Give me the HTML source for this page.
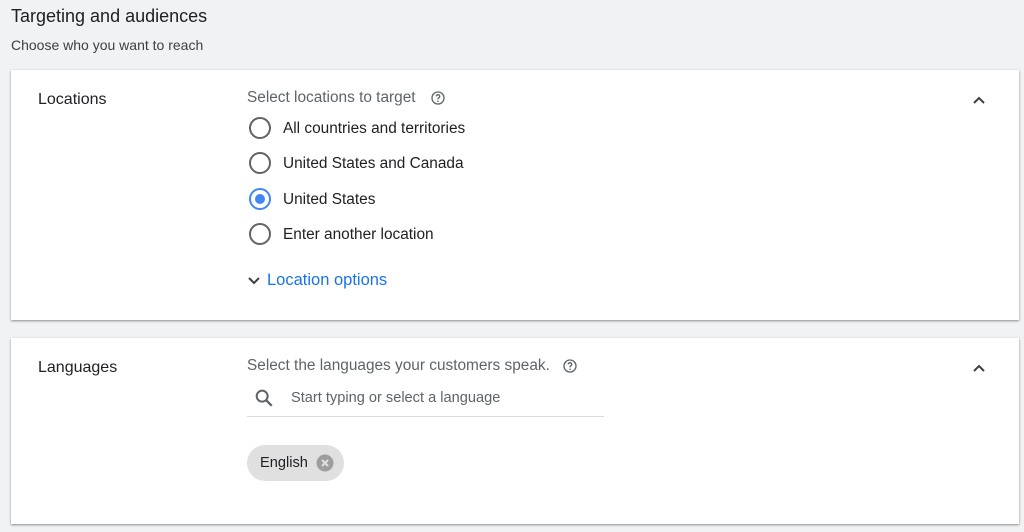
<!DOCTYPE html>
<html><head><style>
body{margin:0;width:1024px;height:532px;background:#f1f2f4;font-family:"Liberation Sans",Arial,sans-serif;position:relative;overflow:hidden;color:#202124}
.t{position:absolute;left:11px;top:6px;font-size:18px;}
.s{position:absolute;left:11px;top:37px;font-size:14px;color:#3c4043}
.card{position:absolute;left:11px;width:1008px;background:#fff;box-shadow:0 1px 2px rgba(0,0,0,.3),0 1px 3px rgba(0,0,0,.15)}
.h{position:absolute;left:27px;font-size:16px;}
.lab{position:absolute;left:236px;font-size:15.4px;color:#5f6368}
.r{position:absolute;left:238px;font-size:15.4px;height:24px;line-height:24px}
.r i{position:absolute;left:0;top:1px;border:2px solid #5f6368;border-radius:50%;box-sizing:border-box;width:22px;height:22px}
.r span{position:absolute;left:34px;top:1px;white-space:nowrap}
.r i.on{border-color:#4285f4}
.r i.on:after{content:"";position:absolute;left:4px;top:4px;width:10px;height:10px;border-radius:50%;background:#4285f4}
</style></head><body>
<div class="t">Targeting and audiences</div>
<div class="s">Choose who you want to reach</div>
<div class="card" style="top:70px;height:250px">
 <div class="h" style="top:21px">Locations</div>
 <div class="lab" style="top:19px">Select locations to target
  <svg style="position:absolute;left:183px;top:1px" width="16" height="16" viewBox="0 0 24 24"><circle cx="12" cy="12" r="9" fill="none" stroke="#5f6368" stroke-width="2"/><path d="M9.5 9.5a2.5 2.5 0 1 1 3.5 2.3c-.7.4-1 .9-1 1.7v.5" fill="none" stroke="#5f6368" stroke-width="2"/><circle cx="12" cy="17" r="1.2" fill="#5f6368"/></svg></div>
 <div class="r" style="top:46px"><i></i><span>All countries and territories</span></div>
 <div class="r" style="top:81px"><i></i><span>United States and Canada</span></div>
 <div class="r" style="top:117px"><i class="on"></i><span>United States</span></div>
 <div class="r" style="top:152px"><i></i><span>Enter another location</span></div>
 <svg style="position:absolute;left:236px;top:206px" width="14" height="10" viewBox="0 0 14 10"><path d="M2 2l5 5 5-5" fill="none" stroke="#3c4043" stroke-width="2"/></svg>
 <div style="position:absolute;left:256px;top:201px;font-size:16.5px;color:#1a73e8">Location options</div>
 <svg style="position:absolute;left:961px;top:25px" width="14" height="10" viewBox="0 0 14 10"><path d="M2 8l5-5 5 5" fill="none" stroke="#3c4043" stroke-width="2"/></svg>
</div>
<div class="card" style="top:338px;height:186px">
 <div class="h" style="top:21px">Languages</div>
 <div class="lab" style="top:19px">Select the languages your customers speak.
  <svg style="position:absolute;left:315px;top:1px" width="16" height="16" viewBox="0 0 24 24"><circle cx="12" cy="12" r="9" fill="none" stroke="#5f6368" stroke-width="2"/><path d="M9.5 9.5a2.5 2.5 0 1 1 3.5 2.3c-.7.4-1 .9-1 1.7v.5" fill="none" stroke="#5f6368" stroke-width="2"/><circle cx="12" cy="17" r="1.2" fill="#5f6368"/></svg></div>
 <svg style="position:absolute;left:242px;top:49px" width="22" height="22" viewBox="0 0 24 24"><circle cx="10" cy="10" r="6" fill="none" stroke="#5f6368" stroke-width="2.2"/><path d="M14.5 14.5l6 6" stroke="#5f6368" stroke-width="2.4"/></svg>
 <div style="position:absolute;left:280px;top:52px;font-size:14.6px;color:#5f6368">Start typing or select a language</div>
 <div style="position:absolute;left:236px;top:78px;width:357px;height:1px;background:#dadce0"></div>
 <div style="position:absolute;left:236px;top:107px;width:97px;height:36px;border-radius:18px;background:#e0e0e0">
  <span style="position:absolute;left:13px;top:10px;font-size:14.6px;color:#202124">English</span>
  <svg style="position:absolute;left:69px;top:9px" width="18" height="18" viewBox="0 0 18 18"><circle cx="9" cy="9" r="8.5" fill="#9e9e9e"/><path d="M6 6l6 6M12 6l-6 6" stroke="#e0e0e0" stroke-width="2"/></svg>
 </div>
 <svg style="position:absolute;left:961px;top:25px" width="14" height="10" viewBox="0 0 14 10"><path d="M2 8l5-5 5 5" fill="none" stroke="#3c4043" stroke-width="2"/></svg>
</div>
</body></html>
